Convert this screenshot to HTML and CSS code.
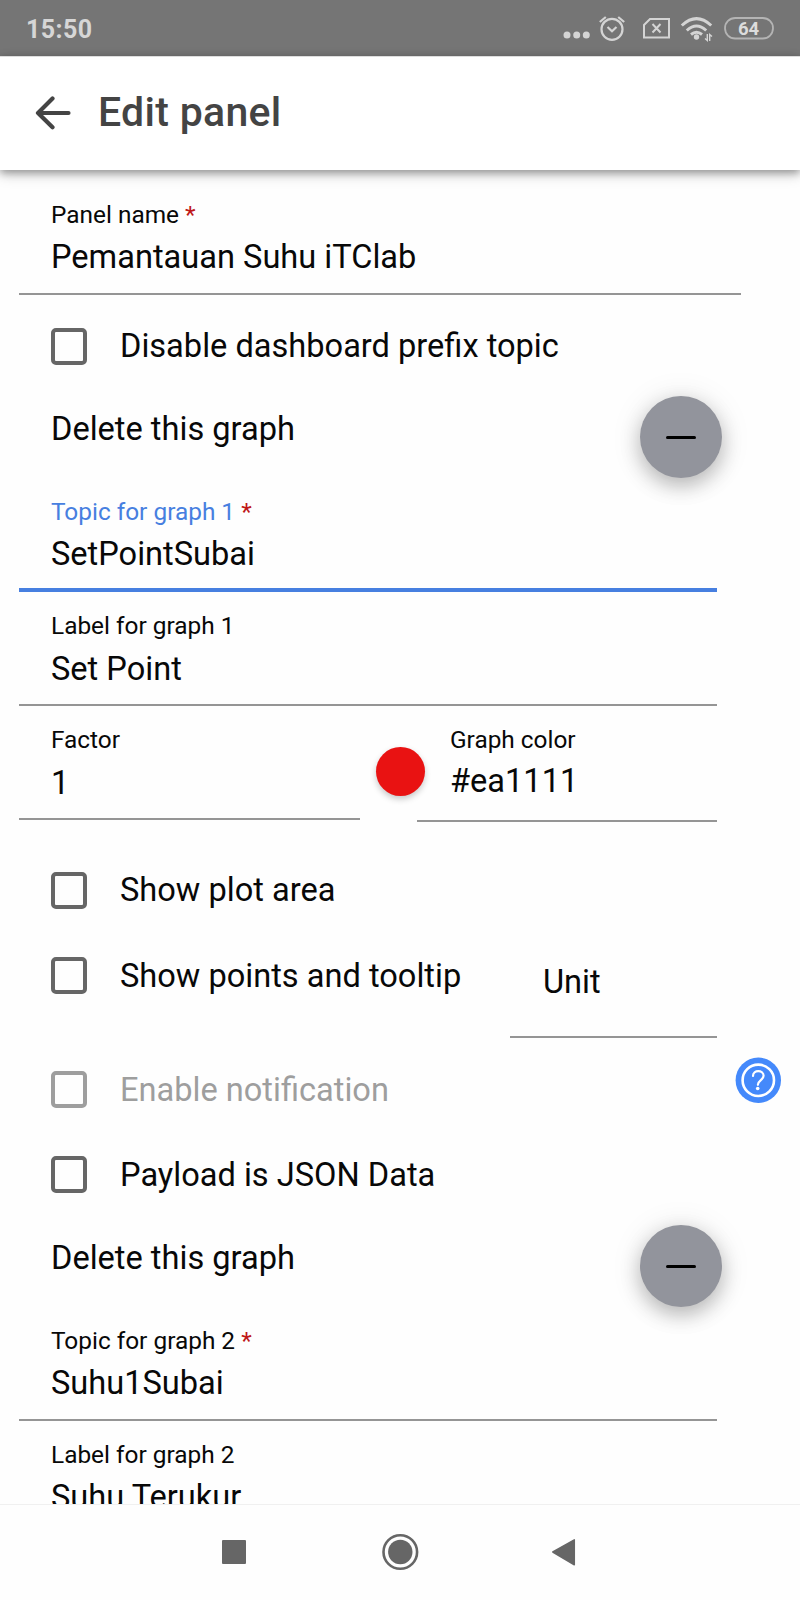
FILE: index.html
```html
<!DOCTYPE html>
<html lang="en">
<head>
<meta charset="utf-8">
<title>Edit panel</title>
<link rel="stylesheet" href="styles.css">
</head>
<body>
<div class="screen">
  <div class="status">
    <span class="clock">15:50</span>
    <svg class="status-icons" width="220" height="56" viewBox="560 0 220 56" fill="none" stroke="#d4d4d4">
      <g fill="#d4d4d4" stroke="none"><circle cx="567" cy="35" r="3.5"/><circle cx="576.7" cy="35" r="3.5"/><circle cx="586.3" cy="35" r="3.5"/></g>
      <g stroke-width="2.200"><circle cx="612" cy="29.3" r="10.5"/><path d="M607.5 27l4.5 4.3 4.5-4.3M599.8 22l6-5M624.2 22l-6-5"/></g>
      <path stroke-width="2" d="M650 19h19v18.500h-25V25zM652.500 24l8 8.500M660.500 24l-8 8.500"/>
      <g stroke-width="3"><path d="M681.800 25.500q14.700-13.800 29.400 0M686.800 30.500q9.700-9 19.400 0"/><path d="M691 34.500q5.500-4.500 11 0"/></g>
      <circle cx="696.500" cy="37" r="2.700" fill="#d4d4d4" stroke="none"/>
      <path stroke-width="1.400" d="M707.300 34v6.500l-2.300-2M709.700 41v-6.500l2.300 2"/>
      <rect x="725" y="18" width="48" height="20.500" rx="10.200" stroke="#b4b4b4" stroke-width="1.800"/>
      <text class="battery" x="748.500" y="35" text-anchor="middle">64</text>
    </svg>
  </div>
  <header class="header">
    <svg width="36" height="34" viewBox="0 0 36 34" fill="none" stroke="#444" stroke-width="4.200" stroke-linecap="round" stroke-linejoin="round"><path d="M17.500 2.500L3 17l14.500 14.200M3 17h30.500"/></svg>
    <h1>Edit panel</h1>
  </header>

  <main class="form">
    <div class="field field-name"><span class="label">Panel name <i>*</i></span><span class="value">Pemantauan Suhu iTClab</span></div>
    <div class="check check-prefix"><span class="box"></span><span class="text">Disable dashboard prefix topic</span></div>

    <div class="delete"><span class="text">Delete this graph</span><span class="fab"></span></div>
    <div class="field active"><span class="label">Topic for graph 1 <i>*</i></span><span class="value">SetPointSubai</span></div>
    <div class="field field-roomy"><span class="label">Label for graph 1</span><span class="value">Set Point</span></div>
    <div class="pair">
      <div class="field factor"><span class="label">Factor</span><span class="value">1</span></div>
      <span class="swatch"></span>
      <div class="field color"><span class="label">Graph color</span><span class="value">#ea1111</span></div>
    </div>
    <div class="check check-plot"><span class="box"></span><span class="text">Show plot area</span></div>
    <div class="points">
      <div class="check check-low"><span class="box"></span><span class="text">Show points and tooltip</span></div>
      <div class="unit"><span class="text">Unit</span></div>
    </div>
    <div class="check check-low check-notify"><span class="box"></span><span class="text">Enable notification</span></div>
    <div class="check check-low"><span class="box"></span><span class="text">Payload is JSON Data</span></div>

    <div class="delete delete-second"><span class="text">Delete this graph</span><span class="fab"></span></div>
    <div class="field"><span class="label">Topic for graph 2 <i>*</i></span><span class="value">Suhu1Subai</span></div>
    <div class="field"><span class="label">Label for graph 2</span><span class="value">Suhu Terukur</span></div>
  </main>

  <nav class="nav">
    <svg width="800" height="95" viewBox="0 1505 800 95" fill="#666">
      <rect x="222" y="1540" width="24" height="24" rx="1"/>
      <circle cx="400.300" cy="1552" r="12.200"/>
      <circle cx="400.300" cy="1552" r="16.800" fill="none" stroke="#666" stroke-width="2.600"/>
      <path d="M552.800 1552L574.300 1539.800V1564.800z" stroke="#666" stroke-width="1.500" stroke-linejoin="round"/>
    </svg>
  </nav>
  <svg class="help" width="46" height="46" viewBox="0 0 46 46" fill="none" stroke="#fff">
    <circle cx="23.300" cy="23.300" r="22.700" fill="#4489fb" stroke="none"/>
    <circle cx="23.300" cy="23.300" r="15.700" stroke-width="2.600"/>
    <path d="M18 19c0-6.500 10.600-6.300 10.600-.2 0 4.200-5.700 4.400-5.700 9" stroke-width="2.200" stroke-linecap="round"/>
    <circle cx="22.700" cy="31.500" r="1.800" fill="#fff" stroke="none"/>
  </svg>
</div>
</body>
</html>
```
FILE: styles.css
```css
* { box-sizing: border-box; }
body { margin: 0; background: #fefefe; font-family: Roboto, "Liberation Sans", sans-serif; color: #080808; }
.screen { position: relative; display: flex; flex-direction: column; width: 800px; height: 1600px; overflow: hidden; }

.status { flex: none; display: flex; justify-content: space-between; height: 56px; padding: 0 20px 0 26px; background: #757575; color: #d6d6d6; }
.clock { font-size: 25px; font-weight: 700; line-height: 59px; letter-spacing: 0.4px; }
.battery { font-size: 18.5px; font-weight: 700; fill: #dcdcdc; stroke: none; }

.header { position: relative; z-index: 1; flex: none; display: flex; align-items: center; gap: 27px; height: 114px; padding: 0 0 1px 35px; background: #fff; border-top: 1px solid #ddd; box-shadow: 0 3px 8px rgba(0, 0, 0, 0.35), 0 5px 14px rgba(0, 0, 0, 0.14); }
.header h1 { margin: 0 0 2px; font-size: 41px; font-weight: 500; line-height: 50px; letter-spacing: 0.3px; color: #444; }

.form { flex: 1; min-height: 0; overflow: hidden; display: flex; flex-direction: column; padding: 1px 83px 0 19px; }
.form > * { flex: none; }
.text, .value { font-size: 32.6px; line-height: 38px; white-space: nowrap; }
.label { font-size: 24.4px; line-height: 28px; white-space: nowrap; }
.label i { font-style: normal; color: #bf1818; }

.field { display: flex; flex-direction: column; gap: 9px; height: 114px; padding: 20px 0 0 32px; border-bottom: 2px solid #959595; }
.field-name { width: 722px; height: 124px; padding-top: 30px; gap: 9px; }
.field-roomy { gap: 10px; }
.active { border-bottom: 4px solid #477fe0; }
.active .label { color: #477fe0; }

.check { display: flex; align-items: center; gap: 33px; height: 85px; padding-left: 32px; }
.check .text { margin-bottom: 2px; }
.check-low .text { margin-bottom: 0; }
.box { flex: none; width: 36px; height: 37px; border: 4px solid #666; border-radius: 5px; }
.check-prefix { height: 101px; padding-top: 2px; }
.check-plot { margin-top: 26px; }
.check-notify { margin-top: 9px; color: #9e9e9e; }
.check-notify .box { border-color: #9e9e9e; }

.delete { display: flex; align-items: center; justify-content: space-between; height: 82px; padding-left: 32px; margin-right: -5px; }
.delete .text { margin-bottom: 17px; }
.delete-second { margin-top: 8px; }
.fab { display: flex; align-items: center; justify-content: center; width: 82px; height: 82px; border-radius: 50%; background: #92949c; box-shadow: 0 8px 20px rgba(0, 0, 0, 0.24), 0 2px 32px rgba(0, 0, 0, 0.1); }
.fab::before { content: ""; width: 30px; height: 3px; border-radius: 1.5px; background: #000; }

.pair { display: flex; height: 116px; }
.factor { width: 341px; padding-top: 20px; gap: 10px; }
.color { flex: 1; height: 116px; padding-top: 20px; gap: 8px; padding-left: 33px; }
.swatch { width: 49px; height: 49px; margin: 41px -8px 0 16px; border-radius: 50%; background: #e91212; box-shadow: 0 3px 6px rgba(0, 0, 0, 0.22); }

.points { display: flex; justify-content: space-between; height: 105px; }
.unit { width: 207px; padding: 30px 0 0 33px; border-bottom: 2px solid #959595; }

.nav { position: relative; flex: none; height: 96px; border-top: 1px solid #f0f0f0; background: #fefefe; }
.nav svg { display: block; }
.help { position: absolute; left: 735px; top: 1057px; }
```
